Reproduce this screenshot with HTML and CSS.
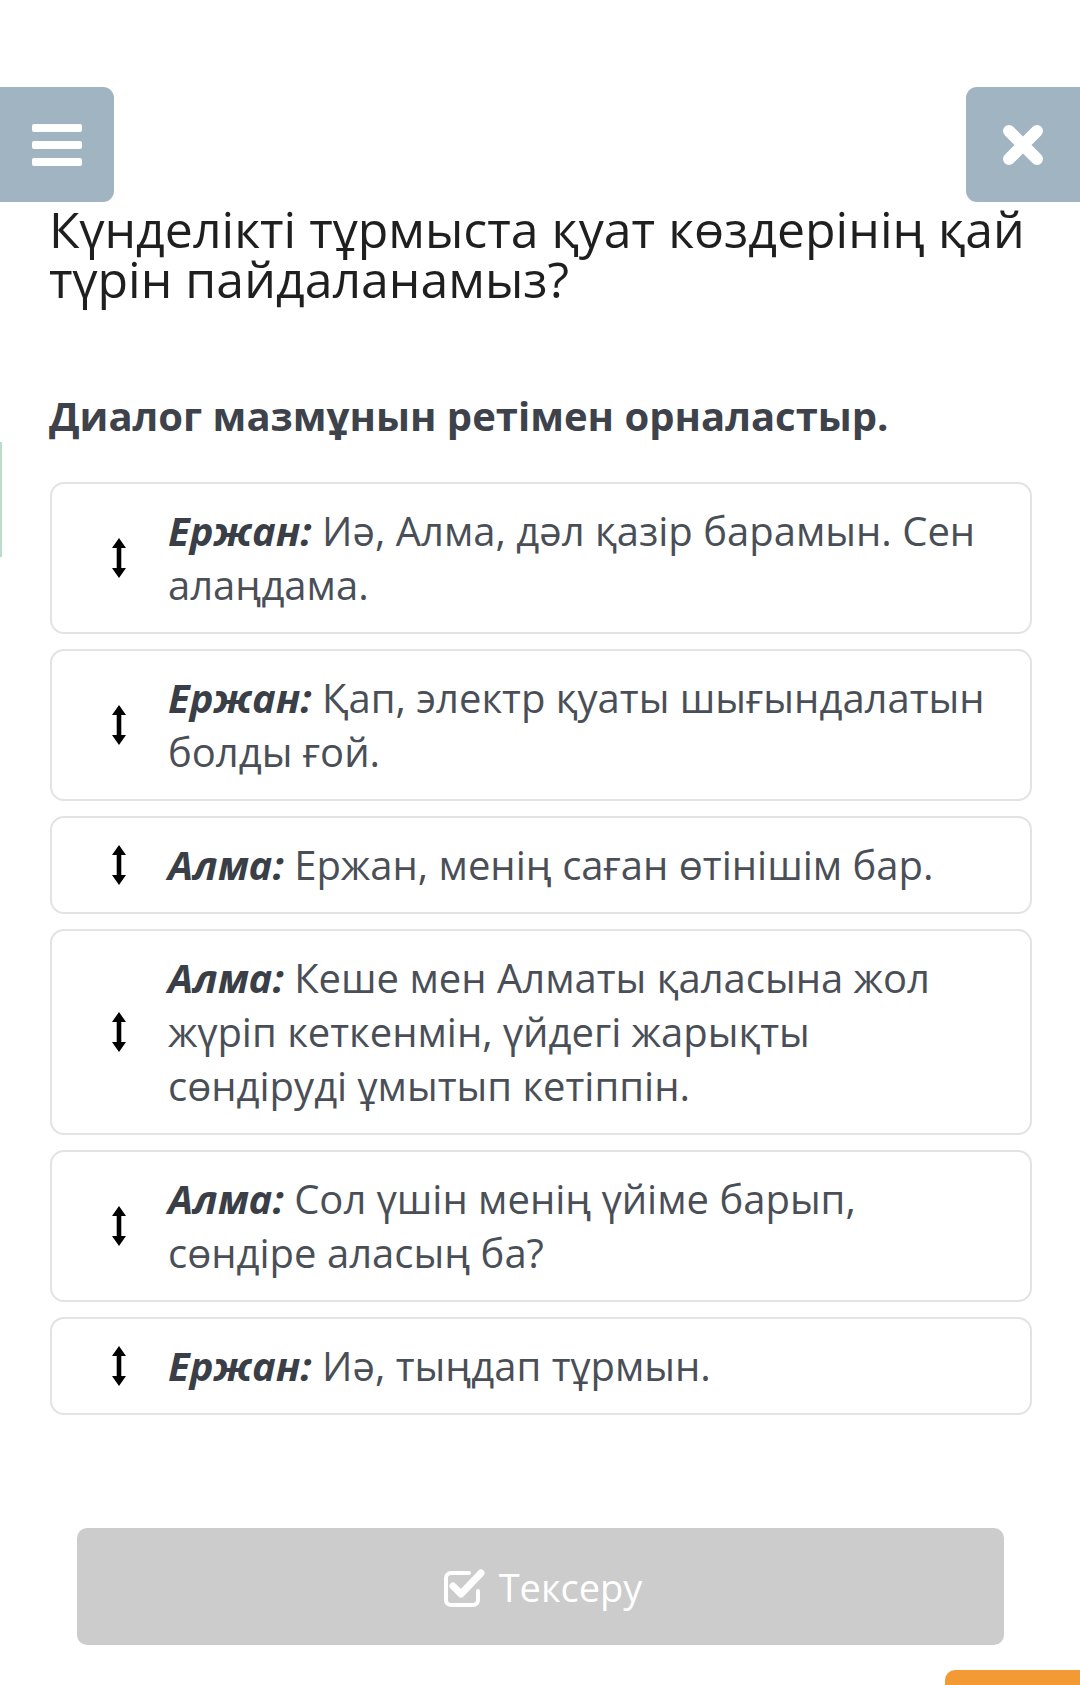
FILE: index.html
```html
<!DOCTYPE html>
<html lang="kk">
<head>
<meta charset="utf-8">
<title>Тексеру</title>
<link rel="stylesheet" href="styles.css">
</head>
<body>
<div class="edge-line"></div>
<header class="topbar">
  <button class="tb-btn tb-menu" aria-label="menu">
    <span class="bar"></span><span class="bar"></span><span class="bar"></span>
  </button>
  <button class="tb-btn tb-close" aria-label="close">
    <svg width="42" height="42" viewBox="0 0 42 42"><path d="M7 7 L35 35 M35 7 L7 35" stroke="#fff" stroke-width="12" stroke-linecap="round"/></svg>
  </button>
</header>
<main class="content">
  <h1 class="title">Күнделікті тұрмыста қуат көздерінің қай түрін пайдаланамыз?</h1>
  <h2 class="subtitle">Диалог мазмұнын ретімен орналастыр.</h2>
  <ul class="cards">
    <li class="card"><span class="grip"><svg width="16" height="40" viewBox="0 0 16 40"><path d="M8 0 L15 10 L10.3 10 L10.3 30 L15 30 L8 40 L1 30 L5.7 30 L5.7 10 L1 10 Z" fill="#000"/></svg></span><p class="txt"><b>Ержан:</b> Иә, Алма, дәл қазір барамын. Сен алаңдама.</p></li>
    <li class="card"><span class="grip"><svg width="16" height="40" viewBox="0 0 16 40"><path d="M8 0 L15 10 L10.3 10 L10.3 30 L15 30 L8 40 L1 30 L5.7 30 L5.7 10 L1 10 Z" fill="#000"/></svg></span><p class="txt"><b>Ержан:</b> Қап, электр қуаты шығындалатын болды ғой.</p></li>
    <li class="card"><span class="grip"><svg width="16" height="40" viewBox="0 0 16 40"><path d="M8 0 L15 10 L10.3 10 L10.3 30 L15 30 L8 40 L1 30 L5.7 30 L5.7 10 L1 10 Z" fill="#000"/></svg></span><p class="txt"><b>Алма:</b> Ержан, менің саған өтінішім бар.</p></li>
    <li class="card"><span class="grip"><svg width="16" height="40" viewBox="0 0 16 40"><path d="M8 0 L15 10 L10.3 10 L10.3 30 L15 30 L8 40 L1 30 L5.7 30 L5.7 10 L1 10 Z" fill="#000"/></svg></span><p class="txt"><b>Алма:</b> Кеше мен Алматы қаласына жол жүріп кеткенмін, үйдегі жарықты сөндіруді ұмытып кетіппін.</p></li>
    <li class="card"><span class="grip"><svg width="16" height="40" viewBox="0 0 16 40"><path d="M8 0 L15 10 L10.3 10 L10.3 30 L15 30 L8 40 L1 30 L5.7 30 L5.7 10 L1 10 Z" fill="#000"/></svg></span><p class="txt"><b>Алма:</b> Сол үшін менің үйіме барып, сөндіре аласың ба?</p></li>
    <li class="card"><span class="grip"><svg width="16" height="40" viewBox="0 0 16 40"><path d="M8 0 L15 10 L10.3 10 L10.3 30 L15 30 L8 40 L1 30 L5.7 30 L5.7 10 L1 10 Z" fill="#000"/></svg></span><p class="txt"><b>Ержан:</b> Иә, тыңдап тұрмын.</p></li>
  </ul>
  <div class="check-wrap">
    <button class="check-btn">
      <svg width="42" height="40" viewBox="0 0 42 40"><path d="M26 6 H8 A5 5 0 0 0 3 11 V33 A5 5 0 0 0 8 38 H30 A5 5 0 0 0 35 33 V24" fill="none" stroke="#fff" stroke-width="4" stroke-linecap="round"/><path d="M10 19 L18 27 L38 6" fill="none" stroke="#fff" stroke-width="7" stroke-linecap="round" stroke-linejoin="round"/></svg>
      <span>Тексеру</span>
    </button>
  </div>
  <div class="corner-tab"></div>
</main>
</body>
</html>
```

FILE: styles.css
```css
* { box-sizing: border-box; }
html, body { margin: 0; padding: 0; background: #fff; }
body {
  font-family: "Open Sans", "Noto Sans", sans-serif;
  width: 1080px;
  height: 1685px;
  overflow: hidden;
  position: relative;
}
.edge-line {
  position: absolute;
  left: 0;
  top: 442px;
  width: 2px;
  height: 115px;
  background: #b9dccb;
}
.topbar {
  display: flex;
  justify-content: space-between;
  padding-top: 87px;
}
.tb-btn {
  border: 0;
  background: #a0b4c1;
  height: 115px;
  padding: 0;
  display: flex;
  align-items: center;
  justify-content: center;
}
.tb-menu {
  width: 114px;
  border-radius: 0 11px 11px 0;
  flex-direction: column;
  gap: 9px;
}
.tb-menu .bar {
  display: block;
  width: 50px;
  height: 8px;
  background: #fff;
  border-radius: 2px;
}
.tb-close {
  width: 114px;
  border-radius: 11px 0 0 11px;
}
.content {
  padding: 0 0 0 49px;
}
.title {
  margin: 2px 0 0 0;
  font-weight: 400;
  font-size: 50px;
  line-height: 50px;
  color: #1f1f1f;
  width: 1010px;
}
.subtitle {
  margin: 85px 0 0 0;
  font-weight: 700;
  font-size: 40px;
  line-height: 54px;
  color: #3d424b;
}
.cards {
  list-style: none;
  margin: 39px 0 0 1px;
  padding: 0;
  width: 982px;
  display: flex;
  flex-direction: column;
  gap: 15px;
}
.card {
  display: flex;
  align-items: center;
  border: 2px solid #e3e3e3;
  border-radius: 14px;
  padding: 20px 37px 20px 59px;
  gap: 41px;
}
.grip { flex: none; display: flex; width: 16px; }
.txt {
  margin: 0;
  flex: 1;
  font-size: 40px;
  line-height: 54px;
  color: #4a4f57;
}
.txt b {
  font-weight: 700;
  font-style: italic;
  color: #3a3f47;
}
.check-wrap {
  margin: 113px 0 0 28px;
  width: 927px;
}
.check-btn {
  width: 100%;
  height: 117px;
  border: 0;
  border-radius: 10px;
  background: #cccccc;
  color: #fff;
  font-family: "Open Sans", sans-serif;
  font-size: 38px;
  display: flex;
  align-items: center;
  justify-content: center;
  gap: 14px;
  padding: 0 0 0 4px;
}
.check-btn span { line-height: 1; }
.corner-tab {
  margin: 25px 0 0 896px;
  width: 135px;
  height: 30px;
  background: #f39a35;
  border-radius: 10px 0 0 0;
}
```
